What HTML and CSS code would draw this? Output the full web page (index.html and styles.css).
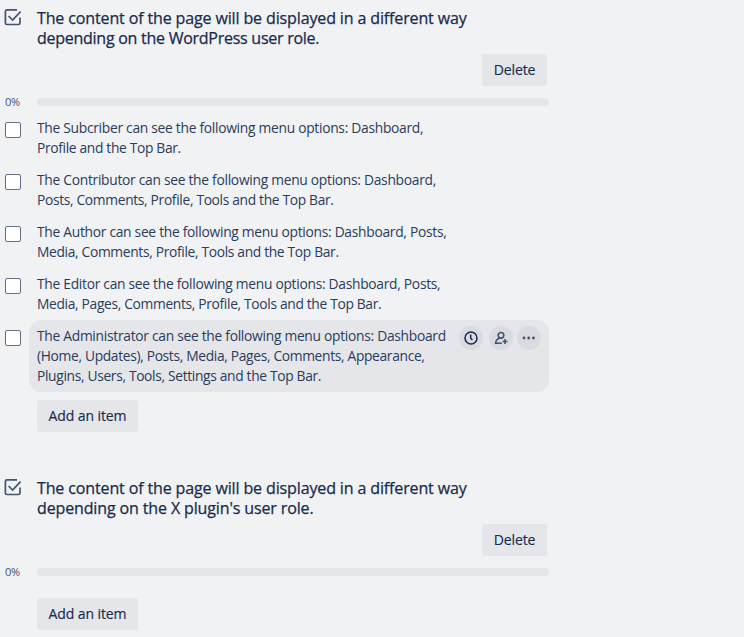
FILE: index.html
```html
<!DOCTYPE html>
<html lang="en">
<head><meta charset="utf-8"><title>Checklists</title><link rel="stylesheet" href="styles.css"></head>
<body>
<main>
<section class="checklist">
  <header class="heading">
    <svg class="check-icon" viewBox="0 0 18 18"><path d="M13 1.9H3Q1.4 1.9 1.4 3.5v11.4q0 1.6 1.6 1.6h11.4q1.6 0 1.6-1.6V9.5M4.6 8l4 4 8-8.3"/></svg>
    <h2>The content of the page will be displayed in a different way<br><span class="role">depending on the WordPress user role.</span></h2>
  </header>
  <div class="actions"><button class="delete">Delete</button></div>
  <div class="progress"><span class="percent">0%</span><div class="track"></div></div>
  <ul class="items">
    <li><span class="box"></span><p>The Subcriber can see the following menu options: Dashboard,<br><span class="rest">Profile and the Top Bar.</span></p></li>
    <li><span class="box"></span><p>The Contributor can see the following menu options: Dashboard,<br><span class="rest">Posts, Comments, Profile, Tools and the Top Bar.</span></p></li>
    <li><span class="box"></span><p>The Author can see the following menu options: Dashboard, Posts,<br><span class="rest">Media, Comments, Profile, Tools and the Top Bar.</span></p></li>
    <li><span class="box"></span><p>The Editor can see the following menu options: Dashboard, Posts,<br><span class="rest">Media, Pages, Comments, Profile, Tools and the Top Bar.</span></p></li>
    <li class="hovered"><span class="box"></span><p>The Administrator can see the following menu options: Dashboard<br><span class="rest">(Home, Updates), Posts, Media, Pages, Comments, Appearance,<br>Plugins, Users, Tools, Settings and the Top Bar.</span></p>
      <div class="tools">
        <span class="tool clock"><svg viewBox="0 0 24 24"><circle cx="12" cy="12" r="6"/><path d="M11.7 8.5v3.8l1.7 1.7"/></svg></span>
        <span class="tool member"><svg viewBox="0 0 24 24"><circle cx="12" cy="9.3" r="2.8"/><path d="M12.8 17.3H6.7c0-2.7 1.5-4.5 4-5.1M16 13v5M13.5 15.5h5"/></svg></span>
        <span class="tool more"><svg viewBox="0 0 24 24"><circle cx="7" cy="12" r="1.4"/><circle cx="11.7" cy="12" r="1.4"/><circle cx="16.4" cy="12" r="1.4"/></svg></span>
      </div>
    </li>
  </ul>
  <button class="add">Add an item</button>
</section>
<section class="checklist">
  <header class="heading">
    <svg class="check-icon" viewBox="0 0 18 18"><path d="M13 1.9H3Q1.4 1.9 1.4 3.5v11.4q0 1.6 1.6 1.6h11.4q1.6 0 1.6-1.6V9.5M4.6 8l4 4 8-8.3"/></svg>
    <h2>The content of the page will be displayed in a different way<br>depending on the X plugin's user role.</h2>
  </header>
  <div class="actions"><button class="delete">Delete</button></div>
  <div class="progress"><span class="percent">0%</span><div class="track"></div></div>
  <ul class="items empty"></ul>
  <button class="add">Add an item</button>
</section>
</main>
</body>
</html>
```

FILE: styles.css
```css
* { box-sizing: border-box; }
body { margin: 0; background: #f1f2f4; color: #172b4d; font-family: "Open Sans", sans-serif; font-size: 14px; line-height: 20px; }
main { width: 549px; padding-top: 8px; }
.checklist { height: 470px; display: flex; flex-direction: column; }
.checklist:last-child { height: 159px; }
.heading { display: flex; height: 46px; }
.check-icon { width: 18px; height: 18px; margin: 0 15px 0 4px; flex: none; fill: none; stroke: #44546f; stroke-width: 1.7; }
h2 { margin: 0; font-size: 16px; line-height: 20px; font-weight: 500; letter-spacing: -0.13px; white-space: nowrap; -webkit-text-stroke: 0.25px #172b4d; }
.role { letter-spacing: -0.26px; }
button { flex: none; height: 32px; padding: 0; border: 0; border-radius: 3px; background: #e4e6ea; color: #172b4d; font: 500 14px/32px "Open Sans", sans-serif; letter-spacing: -0.1px; -webkit-text-stroke: 0.15px #172b4d; }
.actions { display: flex; justify-content: flex-end; padding-right: 2px; }
.delete { width: 65px; }
.progress { display: flex; align-items: center; height: 16px; margin-top: 8px; padding-left: 5px; }
.percent { width: 32px; font-size: 11px; letter-spacing: -0.4px; color: #44546f; }
.track { flex: 1; height: 8px; border-radius: 4px; background: #e4e6ea; }
.items { margin: 2px 0 8px; padding: 0; list-style: none; }
.items li { display: grid; grid-template-columns: 24px 420px 1fr; padding-left: 5px; }
.items p { margin: 0; padding: 6px 0 6px 8px; white-space: nowrap; color: #2a3c5b; font-size: 13.8px; letter-spacing: -0.28px; }
.rest { letter-spacing: -0.33px; }
.box { width: 16px; height: 16px; margin-top: 10px; background: #fff; border: 1px solid #626f86; border-radius: 2px; }
.hovered p { grid-column: 2; grid-row: 1; }
.hovered::before { content: ""; grid-column: 2 / 4; grid-row: 1; background: #e4e6ea; border-radius: 12px; }
.hovered .box { grid-column: 1; grid-row: 1; }
.tools { grid-column: 3; grid-row: 1; display: flex; padding: 6px 0 0 10px; }
.tool { width: 24px; height: 24px; border-radius: 50%; background: #d9dbe1; }
.tool svg { display: block; width: 24px; height: 24px; fill: none; stroke: #44546f; stroke-width: 1.6; }
.tool.clock svg { stroke: #172b4d; stroke-width: 1.5; }
.tool.member { margin-left: 6px; }
.tool.more { margin-left: 4px; }
.tool.more svg { fill: #44546f; stroke: none; }
.add { width: 101px; margin-left: 37px; }
.items.empty { height: 8px; }
```
